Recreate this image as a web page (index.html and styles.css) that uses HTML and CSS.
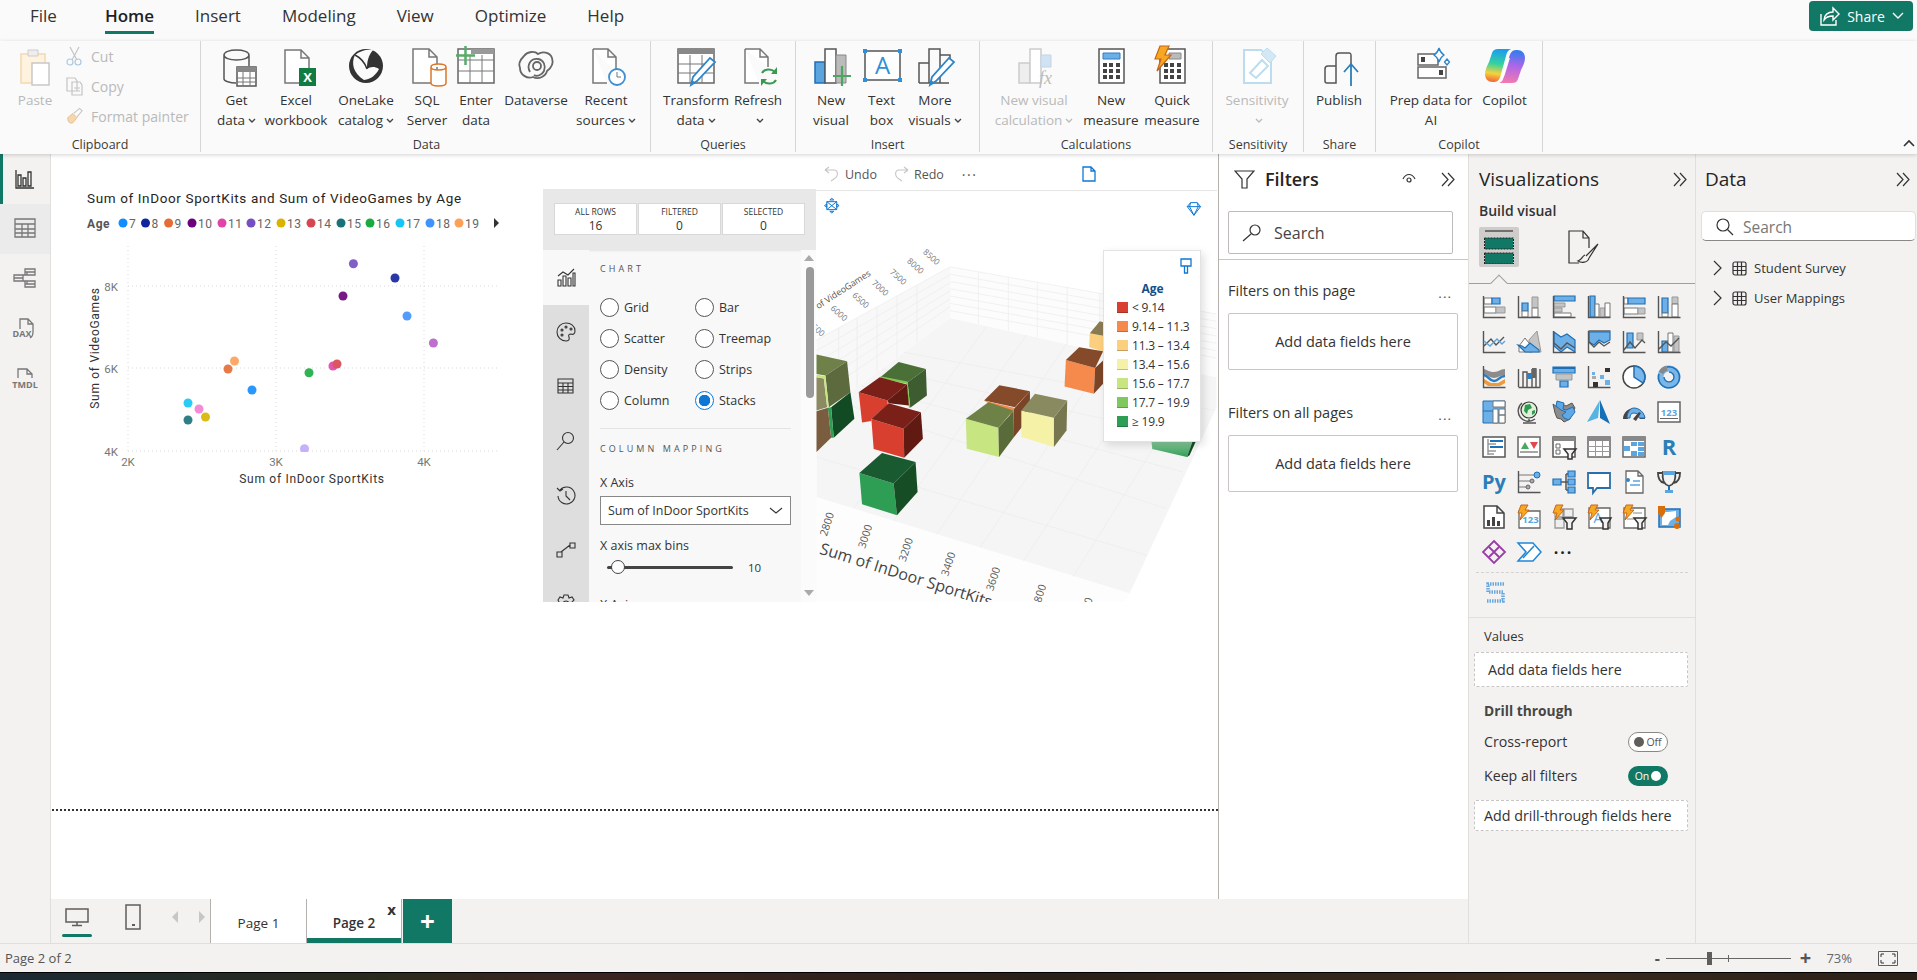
FILE: index.html
```html
<!DOCTYPE html>
<html lang="en">
<head>
<meta charset="utf-8">
<title>Power BI Desktop</title>
<link rel="stylesheet" href="styles.css">
</head>
<body>
<header class="menubar">
  <nav class="tabs">
    <span class="tab tab-file">File</span>
    <span class="tab tab-on">Home</span>
    <span class="tab">Insert</span>
    <span class="tab">Modeling</span>
    <span class="tab">View</span>
    <span class="tab">Optimize</span>
    <span class="tab">Help</span>
  </nav>
  <button class="share">
    <svg width="22" height="22" viewBox="0 0 22 22"><path class="wl" d="M3 9v11h15v-5M6 15c0-5 4-8 9-8V3l6 6-6 6v-4c-4 0-7 1-9 4z"/></svg>
    <span>Share</span>
    <svg width="12" height="8" viewBox="0 0 12 8"><path class="wl" d="M1 1l5 5 5-5"/></svg>
  </button>
</header>

<section class="ribbon">
  <div class="group g-clip">
    <div class="gbody">
      <div class="btn b46 off">
        <svg class="ico" viewBox="0 0 40 40"><path fill="#fff3df" stroke="#f3d9ae" stroke-width="1.5" d="M6 8h24v29H6z"/><path fill="#eee" stroke="#ccc" d="M13 4h10v6H13z"/><path fill="#fff" stroke="#c8c8c8" stroke-width="1.5" d="M17 17h17v22H17z"/></svg>
        <span class="lbl">Paste</span>
      </div>
      <div class="smallcol">
        <div class="small"><svg width="17" height="20" viewBox="0 0 17 20"><path class="fa" d="M4 1l7 13M13 1L6 14"/><circle class="fb" cx="4" cy="16" r="3"/><circle class="fb" cx="12" cy="16" r="3"/></svg>Cut</div>
        <div class="small"><svg width="17" height="20" viewBox="0 0 17 20"><path class="fa" d="M1 2h8l2 3v10H1zM6 6h8l2 3v10H6zM8 12h6M8 15h6"/></svg>Copy</div>
        <div class="small"><svg width="17" height="20" viewBox="0 0 20 20"><path fill="#f6d6ac" stroke="#e9b98a" d="M2 12l6-5 5 5-5 6c-3 1-6 0-6-6z"/><path class="fa" d="M9 7l7-6 3 3-6 7"/></svg>Format painter</div>
      </div>
    </div>
    <div class="glabel">Clipboard</div>
  </div>

  <div class="group g-data">
    <div class="gbody">
      <div class="btn b67">
        <svg class="ico" viewBox="0 0 40 40"><path class="s" d="M7 9v24c0 2 6 4 12 4M7 9c0-3 5.500-5 12.500-5S32 6 32 9v11M7 9c0 3 5.500 5 12.500 5S32 12 32 9"/><path fill="#fff" stroke="#555" stroke-width="1.500" d="M20 21h19v19H20z"/><path fill="#888" d="M20 21h19v5H20z"/><path class="t" d="M26 26v14M33 26v14M20 32h19M20 36h19"/></svg>
        <span class="lbl">Get<br>data<svg class="chev" viewBox="0 0 8 6"><path d="M1 1l3 3 3-3"/></svg></span>
      </div>
      <div class="btn b52">
        <svg class="ico" viewBox="0 0 40 40"><path class="s2" d="M9 4h16l8 8v25H9zM25 4v8h8"/><rect x="23" y="22" width="17" height="18" fill="#107c41"/><text class="xl" x="31.500" y="35.500">X</text></svg>
        <span class="lbl">Excel<br>workbook</span>
      </div>
      <div class="btn b88">
        <svg class="ico" viewBox="0 0 40 40"><circle cx="20" cy="20" r="17" fill="#333"/><path fill="#fafafa" d="M9 9c-4 8-2 18 9 25 7-1 12-5 15-11-5-3-9-2-12 0 0-7 1-13 6-19-7-1-13 1-18 5z"/><path fill="none" stroke="#333" stroke-width="1.500" d="M9 9c6 3 10 8 12 14"/></svg>
        <span class="lbl">OneLake<br>catalog<svg class="chev" viewBox="0 0 8 6"><path d="M1 1l3 3 3-3"/></svg></span>
      </div>
      <div class="btn b34">
        <svg class="ico" viewBox="0 0 40 40"><path class="s2" d="M6 3h16l8 8v26H6zM22 3v8h8"/><path fill="#fff" stroke="#d9782d" stroke-width="1.500" d="M24 21c0-4 15-4 15 0v16c0 4-15 4-15 0zM24 21c0 4 15 4 15 0"/></svg>
        <span class="lbl">SQL<br>Server</span>
      </div>
      <div class="btn b64">
        <svg class="ico" viewBox="0 0 40 40"><path fill="#fff" stroke="#666" stroke-width="1.500" d="M2 3h36v34H2z"/><path fill="#999" d="M15 3h23v5H15z"/><path class="t" d="M14 9v28M26 9v28M2 14h36M2 25h36"/><path stroke="#5aaa6a" stroke-width="2.500" fill="none" d="M9.500 0v19M0 9.500h19"/></svg>
        <span class="lbl">Enter<br>data</span>
      </div>
      <div class="btn b56">
        <svg class="ico" viewBox="0 0 40 40"><path fill="none" stroke="#666" stroke-width="1.800" d="M8 10c4-5 11-5 14-2 4-3 12-2 14 4 2 6-1 10-5 13-1 5-8 9-14 6-6 2-13-2-13-9-2-4 1-9 4-12z"/><path fill="none" stroke="#666" stroke-width="1.800" d="M14 26c-4-7 1-14 8-13 6 1 8 7 6 12-2 4-7 6-10 4"/><circle cx="21" cy="20" r="4" fill="none" stroke="#666" stroke-width="1.800"/></svg>
        <span class="lbl">Dataverse</span>
      </div>
      <div class="btn b84">
        <svg class="ico" viewBox="0 0 40 40"><path class="s2" d="M7 3h15l8 8v15M22 3v8h8M7 3v34h14"/><circle cx="31" cy="31" r="8" fill="#fff" stroke="#3f8fd2" stroke-width="1.800"/><path class="t" d="M31 26v5h4"/></svg>
        <span class="lbl">Recent<br>sources<svg class="chev" viewBox="0 0 8 6"><path d="M1 1l3 3 3-3"/></svg></span>
      </div>
    </div>
    <div class="glabel">Data</div>
  </div>

  <div class="group g-query">
    <div class="gbody">
      <div class="btn b90">
        <svg class="ico" viewBox="0 0 40 40"><path fill="#fff" stroke="#666" stroke-width="1.500" d="M2 3h36v34H2z"/><path fill="#888" d="M2 3h36v5H2z"/><path class="t" d="M14 9v28M26 9v28M2 18h36M2 27h36"/><path fill="#fff" stroke="#2f85c8" stroke-width="1.800" d="M15 39l2-8 17-19 5 4-18 19z"/><path fill="#2f85c8" d="M15 39l1-5 4 3z"/></svg>
        <span class="lbl">Transform<br>data<svg class="chev" viewBox="0 0 8 6"><path d="M1 1l3 3 3-3"/></svg></span>
      </div>
      <div class="btn b34">
        <svg class="ico" viewBox="0 0 40 40"><path class="s2" d="M7 3h15l8 8v10M22 3v8h8M7 3v34h14"/><path fill="none" stroke="#3a9a50" stroke-width="2" d="M24 27c2-4 9-5 13-1M38 34c-2 4-9 5-13 1"/><path fill="#3a9a50" d="M39 21v7h-6zM23 40v-7h6z"/></svg>
        <span class="lbl">Refresh<br><svg class="chev" viewBox="0 0 8 6"><path d="M1 1l3 3 3-3"/></svg></span>
      </div>
    </div>
    <div class="glabel">Queries</div>
  </div>

  <div class="group g-insert">
    <div class="gbody">
      <div class="btn b70">
        <svg class="ico" viewBox="0 0 40 40"><path fill="#5aa5e0" stroke="#1f6fb5" stroke-width="1.500" d="M4 16h10v21H4z"/><path fill="#fff" stroke="#555" stroke-width="1.500" d="M14 3h11v34H14z"/><path fill="#bbb" stroke="#888" d="M25 9h10v28H25z"/><path stroke="#4ea55f" stroke-width="2.200" fill="none" d="M31 20v20M22 30h18"/></svg>
        <span class="lbl">New<br>visual</span>
      </div>
      <div class="btn b31">
        <svg class="ico" viewBox="0 0 40 40"><path fill="#fff" stroke="#555" stroke-width="1.500" d="M3 5h35v29H3z"/><text class="atxt" x="20.500" y="28">A</text><path fill="#2f8fd8" d="M1 3h4v4H1zM36 3h4v4h-4zM1 32h4v4H1zM36 32h4v4h-4z"/></svg>
        <span class="lbl">Text<br>box</span>
      </div>
      <div class="btn b76">
        <svg class="ico" viewBox="0 0 40 40"><path class="s" d="M4 37V17h10v20M14 17V3h11v34M25 9h10v12M4 37h30"/><path fill="#fff" stroke="#2f85c8" stroke-width="1.800" d="M15 39l2-8 17-19 5 4-18 19z"/><path fill="#2f85c8" d="M15 39l1-5 4 3z"/></svg>
        <span class="lbl">More<br>visuals<svg class="chev" viewBox="0 0 8 6"><path d="M1 1l3 3 3-3"/></svg></span>
      </div>
    </div>
    <div class="glabel">Insert</div>
  </div>

  <div class="group g-calc">
    <div class="gbody">
      <div class="btn b108 off">
        <svg class="ico" viewBox="0 0 40 40"><path fill="#eee" stroke="#ccc" stroke-width="1.500" d="M5 17h11v20H5z"/><path fill="#fff" stroke="#ccc" stroke-width="1.500" d="M16 3h11v34H16z"/><path fill="#cfe3f5" stroke="#c5d5e2" d="M27 9h10v12H27z"/><text class="fx" x="25" y="38">fx</text></svg>
        <span class="lbl">New visual<br>calculation<svg class="chev" viewBox="0 0 8 6"><path d="M1 1l3 3 3-3"/></svg></span>
      </div>
      <div class="btn b46">
        <svg class="ico" viewBox="0 0 40 40"><path fill="#fff" stroke="#555" stroke-width="1.500" d="M8 3h25v34H8z"/><path fill="#6db0e8" stroke="#2f7fc4" d="M12 7h17v6H12z"/><path fill="#444" d="M12 17h4v4h-4zM18 17h4v4h-4zM25 17h4v4h-4zM12 23h4v4h-4zM18 23h4v4h-4zM25 23h4v4h-4zM12 29h4v4h-4zM18 29h4v4h-4zM25 29h4v4h-4z"/></svg>
        <span class="lbl">New<br>measure</span>
      </div>
      <div class="btn b76">
        <svg class="ico" viewBox="0 0 40 40"><path fill="#fff" stroke="#555" stroke-width="1.500" d="M8 3h25v34H8z"/><path fill="#bbb" stroke="#888" d="M17 7h12v6H17z"/><path fill="#444" d="M12 17h4v4h-4zM18 17h4v4h-4zM25 17h4v4h-4zM12 23h4v4h-4zM18 23h4v4h-4zM25 23h4v4h-4zM12 29h4v4h-4zM18 29h4v4h-4zM25 29h4v4h-4z"/><path fill="#f7a823" stroke="#c8661a" stroke-width="1.200" d="M8 0h9l-4 9h6L5 25l4-12H3z"/></svg>
        <span class="lbl">Quick<br>measure</span>
      </div>
    </div>
    <div class="glabel">Calculations</div>
  </div>

  <div class="group g-sens">
    <div class="gbody">
      <div class="btn b88 off">
        <svg class="ico" viewBox="0 0 40 40"><path fill="#fff" stroke="#bcdcef" stroke-width="2" d="M7 4h17l10 8v25H7z"/><path fill="none" stroke="#bcdcef" stroke-width="2" d="M13 27l12-13 6 6-12 12z"/><path fill="#d2e8f5" stroke="#bcdcef" d="M24 8l6-6 9 8-6 7z"/></svg>
        <span class="lbl">Sensitivity<br><svg class="chev" viewBox="0 0 8 6"><path d="M1 1l3 3 3-3"/></svg></span>
      </div>
    </div>
    <div class="glabel">Sensitivity</div>
  </div>

  <div class="group g-share">
    <div class="gbody">
      <div class="btn b70">
        <svg class="ico" viewBox="0 0 40 40"><path class="s" d="M17 37h-9c-1 0-2-1-2-2V23c0-2 1-3 3-3h8v17zM17 20V10c0-2 1-3 3-3h10c2 0 2 1 2 3v9"/><path fill="none" stroke="#2a7fb8" stroke-width="1.800" d="M32 40V18M25 26l7-8 7 8"/></svg>
        <span class="lbl">Publish</span>
      </div>
    </div>
    <div class="glabel">Share</div>
  </div>

  <div class="group g-copilot">
    <div class="gbody">
      <div class="btn b110">
        <svg class="ico" viewBox="0 0 40 40"><path fill="#fff" stroke="#666" stroke-width="1.500" d="M7 8h20v11H7zM7 21h28v11H7z"/><path fill="#444" d="M10 11h4v5h-4zM28 24h4v5h-4z"/><path fill="#fafafa" stroke="#2f85c8" stroke-width="1.300" d="M28 2c1 4 2 5 5 7-3 2-4 3-5 7-1-4-2-5-5-7 3-2 4-3 5-7zM36 13l2.500 3-2.500 3-2.500-3z"/></svg>
        <span class="lbl">Prep data for<br>AI</span>
      </div>
      <div class="btn b37">
        <svg class="ico" viewBox="0 0 40 40"><defs><linearGradient id="cpa" x1=".5" y1="0" x2=".4" y2="1"><stop offset="0" stop-color="#1a9bf0"/><stop offset=".45" stop-color="#34d2a0"/><stop offset=".75" stop-color="#f6d23c"/><stop offset="1" stop-color="#f0683c"/></linearGradient><linearGradient id="cpb" x1=".6" y1="0" x2=".5" y2="1"><stop offset="0" stop-color="#2f7cf0"/><stop offset=".5" stop-color="#b266e6"/><stop offset="1" stop-color="#f07ab0"/></linearGradient></defs><path fill="url(#cpb)" d="M27 37H14c3-1 4-3 5-7l5-18c1-5 3-8 7-8h1c5 0 8 3 8 8 0 4-2 8-4 12l-3 9c-1 3-3 4-6 4z"/><path fill="url(#cpa)" d="M13 3h13c-3 1-4 3-5 7l-5 18c-1 5-3 8-7 8H8c-5 0-8-3-8-8 0-4 2-8 4-12l3-9c1-3 3-4 6-4z"/><path fill="#fff" opacity=".9" d="M25 12l-5 16c-1 3-2 4-4 5l5-18c1-2 2-3 4-3z"/></svg>
        <span class="lbl">Copilot</span>
      </div>
    </div>
    <div class="glabel">Copilot</div>
  </div>
  <svg class="collapse" width="12" height="8" viewBox="0 0 12 8"><path d="M1 7l5-5 5 5"/></svg>
</section>

<main class="workspace">
  <aside class="leftnav">
    <div class="nav nav-active"><svg width="22" height="22" viewBox="0 0 22 22"><path class="n" d="M2 2v18h18"/><path class="n" d="M4 7h3v11H4zM9 10h3v8H9zM14 4h3v14h-3z"/></svg></div>
    <div class="nav nav-sel"><svg width="22" height="22" viewBox="0 0 22 22"><path class="n2" d="M1 1h20v18H1zM1 6h20M1 11h20M1 15h20M8 6v13M14 6v13"/></svg></div>
    <div class="nav"><svg width="24" height="24" viewBox="0 0 24 24"><path class="n2" d="M12 2h10v6H12zM1 8h9v6H1zM1 11h9M12 14h10v6H12zM12 17h10M12 5h10M10 8h4V5M10 14h4v3"/></svg></div>
    <div class="nav"><svg width="26" height="24" viewBox="0 0 26 24"><path class="n2" d="M8 12V2h8l5 5v8c0 3-1 5-3 6M16 2v5h5"/><text class="navt" x="10" y="20">DAX</text></svg></div>
    <div class="nav"><svg width="26" height="24" viewBox="0 0 26 24"><path class="n2" d="M6 11V2h9l5 5v4M15 2v5h5"/><text class="navt" x="13" y="21">TMDL</text></svg></div>
  </aside>

  <div class="center">
    <div class="upper">
      <div class="canvas">
        <div class="undo">
          <svg class="tb-i" width="16" height="16" viewBox="0 0 16 16"><path d="M1 4h9c4 0 5 6 0 9L7 15M1 4l4-3M1 4l4 3"/></svg><span class="tb-t">Undo</span>
          <svg class="tb-i ml16" width="16" height="16" viewBox="0 0 16 16"><path d="M15 4H6C2 4 1 10 6 13l3 2M15 4l-4-3M15 4l-4 3"/></svg><span class="tb-t">Redo</span>
          <span class="tb-dots">···</span>
          <svg class="tb-doc" width="14" height="16" viewBox="0 0 14 16"><path d="M1 1h8l4 4v10H1zM9 1v4h4"/></svg>
        </div>

        <svg class="scatter" width="450" height="300" viewBox="70 185 450 300">
          <defs><clipPath id="plot"><rect x="70" y="185" width="450" height="267"/></clipPath></defs>
          <text class="sc-title" x="87" y="203">Sum of InDoor SportKits and Sum of VideoGames by Age</text>
          <text class="sc-age" x="87" y="228">Age</text>
          <g class="sc-leg">
            <circle cx="123" cy="223" r="4.500" fill="#118dff"/><text x="129" y="228">7</text>
            <circle cx="145.500" cy="223" r="4.500" fill="#12239e"/><text x="151.500" y="228">8</text>
            <circle cx="168.600" cy="223" r="4.500" fill="#e66c37"/><text x="174.500" y="228">9</text>
            <circle cx="192" cy="223" r="4.500" fill="#6b007b"/><text x="198" y="228">10</text>
            <circle cx="222" cy="223" r="4.500" fill="#e044a7"/><text x="228" y="228">11</text>
            <circle cx="251" cy="223" r="4.500" fill="#744ec2"/><text x="257" y="228">12</text>
            <circle cx="281" cy="223" r="4.500" fill="#d9b300"/><text x="287" y="228">13</text>
            <circle cx="311" cy="223" r="4.500" fill="#d64550"/><text x="317" y="228">14</text>
            <circle cx="341" cy="223" r="4.500" fill="#197278"/><text x="347" y="228">15</text>
            <circle cx="370" cy="223" r="4.500" fill="#1aab40"/><text x="376" y="228">16</text>
            <circle cx="400" cy="223" r="4.500" fill="#15c6f4"/><text x="406" y="228">17</text>
            <circle cx="430" cy="223" r="4.500" fill="#4092ff"/><text x="436" y="228">18</text>
            <circle cx="459" cy="223" r="4.500" fill="#ffa058"/><text x="465" y="228">19</text>
            <path d="M494 218l5 5-5 5z" fill="#333"/>
          </g>
          <path class="sc-grid" d="M128 246v205M276 246v205M424 246v205M128 286h370M128 368h370M128 451h370"/>
          <g class="sc-tick">
            <text x="118" y="291" text-anchor="end">8K</text>
            <text x="118" y="373" text-anchor="end">6K</text>
            <text x="118" y="456" text-anchor="end">4K</text>
            <text x="128" y="466" text-anchor="middle">2K</text>
            <text x="276" y="466" text-anchor="middle">3K</text>
            <text x="424" y="466" text-anchor="middle">4K</text>
          </g>
          <text class="sc-ax" x="312" y="483" text-anchor="middle">Sum of InDoor SportKits</text>
          <text class="sc-ax" transform="translate(99 348) rotate(-90)" text-anchor="middle">Sum of VideoGames</text>
          <g class="sc-dots" clip-path="url(#plot)">
            <circle cx="353.400" cy="263.700" r="4.500" fill="#744ec2"/>
            <circle cx="395" cy="278" r="4.500" fill="#12239e"/>
            <circle cx="343" cy="296" r="4.500" fill="#6b007b"/>
            <circle cx="407" cy="316" r="4.500" fill="#4092ff"/>
            <circle cx="433.400" cy="343" r="4.500" fill="#b75fc8"/>
            <circle cx="234.500" cy="361" r="4.500" fill="#ffa058"/>
            <circle cx="228" cy="369" r="4.500" fill="#e66c37"/>
            <circle cx="333" cy="366" r="4.500" fill="#e044a7"/>
            <circle cx="337" cy="364" r="4.500" fill="#d64550"/>
            <circle cx="309" cy="372.700" r="4.500" fill="#1aab40"/>
            <circle cx="252" cy="390" r="4.500" fill="#118dff"/>
            <circle cx="188" cy="403" r="4.500" fill="#15c6f4"/>
            <circle cx="199" cy="409" r="4.500" fill="#f47ed4"/>
            <circle cx="205.500" cy="417" r="4.500" fill="#d9b300"/>
            <circle cx="188" cy="420" r="4.500" fill="#197278"/>
            <circle cx="304.500" cy="448.700" r="4.500" fill="#bfa9fa"/>
          </g>
        </svg>

        <div class="sanddance">
          <div class="stats">
            <div class="stat"><span class="stat-k">ALL ROWS</span><span class="stat-v">16</span></div>
            <div class="stat"><span class="stat-k">FILTERED</span><span class="stat-v">0</span></div>
            <div class="stat"><span class="stat-k">SELECTED</span><span class="stat-v">0</span></div>
          </div>
          <div class="sd-body">
            <div class="sd-tabs">
              <div class="sd-tab sd-tab-on"><svg width="20" height="20" viewBox="0 0 20 20"><path class="k" d="M2 13h3v6H2zM7 9h3v10H7zM12 11h3v8h-3zM17 6h2v13h-2zM2 9l5-4 5 3 6-6"/></svg></div>
              <div class="sd-tab"><svg width="20" height="20" viewBox="0 0 20 20"><path class="k" d="M10 1c5 0 9 3 9 8 0 3-2 4-4 3-2 0-3 1-2 3 1 3-1 4-3 4-5 0-9-4-9-9s4-9 9-9z"/><circle class="k" cx="6" cy="8" r="1"/><circle class="k" cx="10" cy="5" r="1"/><circle class="k" cx="15" cy="7" r="1"/><circle class="k" cx="6" cy="13" r="1"/></svg></div>
              <div class="sd-tab"><svg width="20" height="20" viewBox="0 0 20 20"><path class="k" d="M2 3h15v14H2zM2 7h15M2 10.500h15M2 14h15M7 7v10M12 7v10"/></svg></div>
              <div class="sd-tab"><svg width="20" height="20" viewBox="0 0 20 20"><circle class="k" cx="12" cy="7" r="5.500"/><path class="k" d="M8 11l-7 8"/></svg></div>
              <div class="sd-tab"><svg width="20" height="20" viewBox="0 0 20 20"><path class="k" d="M4 5a8.500 8.500 0 1 1-2 6M1 3l3 3 3-2M10 6v5l4 4"/></svg></div>
              <div class="sd-tab"><svg width="20" height="20" viewBox="0 0 20 20"><path class="k" d="M1 12h5v5H1zM14 3h5v5h-5zM5 12l9-7"/></svg></div>
              <div class="sd-tab"><svg width="20" height="20" viewBox="0 0 20 20"><circle class="k" cx="10" cy="10" r="3"/><path class="k" d="M8 1h4l1 3 3-1 2 3-2 2 2 4-2 3-3-1-1 3H8l-1-3-3 1-2-3 2-2-2-4 2-3 3 1z"/></svg></div>
            </div>
            <div class="sd-content">
              <div class="sd-h">CHART</div>
              <div class="radios">
                <label class="radio"><i class="dot"></i>Grid</label>
                <label class="radio"><i class="dot"></i>Bar</label>
                <label class="radio"><i class="dot"></i>Scatter</label>
                <label class="radio"><i class="dot"></i>Treemap</label>
                <label class="radio"><i class="dot"></i>Density</label>
                <label class="radio"><i class="dot"></i>Strips</label>
                <label class="radio"><i class="dot"></i>Column</label>
                <label class="radio"><i class="dot dot-on"></i>Stacks</label>
              </div>
              <div class="sd-h sd-h2">COLUMN MAPPING</div>
              <div class="sd-f">X Axis</div>
              <div class="sd-sel"><span>Sum of InDoor SportKits</span><svg width="14" height="8" viewBox="0 0 14 8"><path class="k" d="M1 1l6 5 6-5"/></svg></div>
              <div class="sd-f sd-f2">X axis max bins</div>
              <div class="slider"><div class="track"><i class="knob"></i></div><span>10</span></div>
              <div class="sd-f">X Axis</div>
            </div>
            <div class="sd-scroll"><i class="up"></i><i class="thumb"></i><i class="down"></i></div>
          </div>
        </div>

        <svg class="cube3d" width="401" height="412" viewBox="18 30 1203 1236">
          <path d="M420 412L1221 590V680L960 1240 945 1266H18V950 711Z" fill="#f5f5f5"/>
          <path d="M18 950L960 1240 945 1266H18Z" fill="#fdfdfd"/>
          <path d="M420 258L1221 400V590L420 412Z" fill="#fcfcfc"/>
          <path d="M420 258L18 478V711L420 412Z" fill="#f8f8f8"/>
          <path class="g3" d="M420 258L1221 400M420 280L1221 422M420 302L1221 444M420 324L1221 466M420 346L1221 488M420 368L1221 510M420 390L1221 532M505 273V430M595 289V450M682 305V470M772 320V490M870 338V512"/>
          <path class="g3" d="M420 258L18 478M420 282L18 510M420 306L18 545M420 330L18 580M420 354L18 615M420 378L18 650M320 314V486M260 347V530M200 380V575M140 413V620M85 442V660"/>
          <path class="g3" d="M530 437L130 985M650 463L250 1022M770 490L380 1062M900 520L510 1102M1030 548L640 1143M1170 580L790 1190"/>
          <path class="g3" d="M280 515L1215 690M215 565L1170 780M150 615L1120 875M85 665L1070 985M18 830L1010 1125"/>
          <g class="t3s">
            <text transform="translate(358 235) rotate(42)" text-anchor="middle">8500</text>
            <text transform="translate(310 262) rotate(42)" text-anchor="middle">8000</text>
            <text transform="translate(258 295) rotate(42)" text-anchor="middle">7500</text>
            <text transform="translate(204 328) rotate(42)" text-anchor="middle">7000</text>
            <text transform="translate(145 365) rotate(42)" text-anchor="middle">6500</text>
            <text transform="translate(80 404) rotate(42)" text-anchor="middle">6000</text>
            <text transform="translate(12 450) rotate(42)" text-anchor="middle">5500</text>
          </g>
          <text class="t3a" transform="translate(183 282) rotate(-33)" text-anchor="end">Sum of VideoGames</text>
          <g class="t3x">
            <text transform="translate(60 1035) rotate(-72)" text-anchor="middle">2800</text>
            <text transform="translate(175 1072) rotate(-72)" text-anchor="middle">3000</text>
            <text transform="translate(297 1112) rotate(-72)" text-anchor="middle">3200</text>
            <text transform="translate(425 1155) rotate(-72)" text-anchor="middle">3400</text>
            <text transform="translate(560 1200) rotate(-72)" text-anchor="middle">3600</text>
            <text transform="translate(698 1252) rotate(-72)" text-anchor="middle">3800</text>
            <text transform="translate(838 1292) rotate(-72)" text-anchor="middle">4000</text>
          </g>
          <text class="t3b" transform="translate(25 1120) rotate(17.500)">Sum of InDoor SportKits</text>

          <!-- far-left stack -->
          <path d="M18 522L110 542 45 585 18 580Z" fill="#6f8148"/>
          <path d="M45 585L110 542 120 635 55 680Z" fill="#5d6a3d"/>
          <path d="M18 590L40 594 50 680 18 690Z" fill="#8b8a63"/>
          <path d="M18 582L45 587 55 680 50 680 40 594 18 590Z" fill="#c6e57f"/>
          <path d="M62 680L120 635 132 715 70 772Z" fill="#124a24"/>
          <path d="M52 682L62 680 70 772 62 772Z" fill="#2f9e55"/>
          <path d="M18 692L52 682 62 772 18 815Z" fill="#7a5c3e"/>
          <!-- back green -->
          <path d="M210 590L265 544 347 565 292 605Z" fill="#4a7038"/>
          <path d="M292 605L347 565 350 645 300 682Z" fill="#3d5c30"/>
          <path d="M210 587L292 603 300 682 296 682 288 610 215 594Z" fill="#7ec850"/>
          <!-- rear red -->
          <path d="M145 635L232 660 232 672 183 716V722L155 726Z" fill="#d93f2e"/>
          <path d="M145 635L208 590 290 612 232 660Z" fill="#7a2018"/>
          <path d="M232 660L290 612 296 675 235 668Z" fill="#611a12"/>
          <!-- front red -->
          <path d="M183 716L280 745 282 832 190 806Z" fill="#d93f2e"/>
          <path d="M280 745L332 695 338 775 282 832Z" fill="#611a12"/>
          <path d="M183 716L235 668 332 695 280 745Z" fill="#7a2018"/>
          <!-- dark green -->
          <path d="M147 878L250 910 260 1005 155 972Z" fill="#2f9e55"/>
          <path d="M250 910L316 845 322 935 260 1005Z" fill="#164d25"/>
          <path d="M147 878L215 818 316 845 250 910Z" fill="#1a5a30"/>
          <!-- orange-brown behind lime -->
          <path d="M522 660L568 614 660 632 615 680Z" fill="#854a2a"/>
          <path d="M612 685L660 632 660 710 612 770Z" fill="#7a4426"/>
          <path d="M522 660L612 682 612 770 600 760V690L535 668Z" fill="#f08a4c"/>
          <!-- lime -->
          <path d="M467 715L565 742 567 830 470 805Z" fill="#c7e681"/>
          <path d="M565 742L610 692 612 770 567 830Z" fill="#5a6b3a"/>
          <path d="M467 715L535 665 610 690 565 742Z" fill="#6e8248"/>
          <!-- yellow -->
          <path d="M634 690L732 712 732 800 634 770Z" fill="#f5f2a8"/>
          <path d="M732 712L772 660 770 750 732 800Z" fill="#76764f"/>
          <path d="M634 690L675 640 772 660 732 712Z" fill="#8a8a60"/>
          <!-- right cubes -->
          <path d="M840 458L880 465V512L838 500Z" fill="#fccf7e"/>
          <path d="M840 458L870 422 880 425V465Z" fill="#8a7a50"/>
          <path d="M768 538L856 562 852 640 764 618Z" fill="#f58a4c"/>
          <path d="M856 562L880 540V610L852 640Z" fill="#7a4426"/>
          <path d="M768 538L808 500 880 512 856 562Z" fill="#854a2a"/>
          <defs><linearGradient id="gl" x1="0" y1="0" x2="0" y2="1"><stop offset="0" stop-color="#8fcba0"/><stop offset="1" stop-color="#2f9e55"/></linearGradient></defs>
          <path d="M1025 780L1150 780 1132 830 1028 806Z" fill="url(#gl)"/>
          <path d="M1132 830L1150 780H1160L1140 825Z" fill="#164d25"/>

          <g class="i3">
            <path d="M49 62h30v24H49zM49 62l30 24M79 62L49 86M64 52l-6 5h12zM64 96l-6-5h12zM42 74l7-5v10zM86 74l-7-5v10z"/>
            <path d="M1143 65h20l10 12-20 26-20-26zM1133 77h40M1143 65l-3 12 13 26 13-26-3-12"/>
          </g>
        </svg>

        <div class="legend3d">
          <svg class="pin" width="12" height="16" viewBox="0 0 12 16"><path d="M1 1h10v7H1zM4.500 8v7h3V8"/></svg>
          <div class="lg-h">Age</div>
          <div class="lg-r"><i class="sw c1"></i>&lt; 9.14</div>
          <div class="lg-r"><i class="sw c2"></i>9.14 – 11.3</div>
          <div class="lg-r"><i class="sw c3"></i>11.3 – 13.4</div>
          <div class="lg-r"><i class="sw c4"></i>13.4 – 15.6</div>
          <div class="lg-r"><i class="sw c5"></i>15.6 – 17.7</div>
          <div class="lg-r"><i class="sw c6"></i>17.7 – 19.9</div>
          <div class="lg-r"><i class="sw c7"></i>≥ 19.9</div>
        </div>

        <div class="pagebreak"></div>
      </div>

      <aside class="filters">
        <div class="f-head">
          <svg width="21" height="19" viewBox="0 0 21 19"><path class="f" d="M1 1h19l-7 8v9H8V9z"/></svg>
          <span class="f-title">Filters</span>
          <svg class="f-eye" width="14" height="12" viewBox="0 0 14 12"><path class="f" d="M1 6c3-6 9-6 12 0"/><circle class="f" cx="7" cy="7" r="2"/></svg>
          <svg class="f-dbl" width="16" height="15" viewBox="0 0 16 15"><path class="f" d="M2 1l6 6.500L2 14M8 1l6 6.500L8 14"/></svg>
        </div>
        <div class="f-search">
          <svg width="20" height="18" viewBox="0 0 20 18"><circle class="f" cx="13" cy="6" r="5"/><path class="f" d="M9 10l-8 7"/></svg>
          <span>Search</span>
        </div>
        <div class="f-sec"><span>Filters on this page</span><b>...</b></div>
        <div class="f-box">Add data fields here</div>
        <div class="f-sec f-sec2"><span>Filters on all pages</span><b>...</b></div>
        <div class="f-box">Add data fields here</div>
      </aside>
    </div>

    <footer class="pagebar">
      <div class="view-i view-on"><svg width="24" height="20" viewBox="0 0 24 20"><path class="pg" d="M1 2h22v13H1zM12 15v3M7 18.500h10"/></svg></div>
      <div class="view-i"><svg width="16" height="26" viewBox="0 0 16 26"><path class="pg" d="M1 1h14v24H1z"/><rect x="7" y="20" width="3" height="2" fill="#605e5c"/></svg></div>
      <div class="arrows"><i class="al"></i><i class="ar"></i></div>
      <div class="ptab">Page 1</div>
      <div class="ptab ptab-on">Page 2<span class="px">x</span></div>
      <div class="padd">+</div>
    </footer>
  </div>

  <aside class="viz">
    <div class="p-head"><span class="p-title">Visualizations</span><svg width="16" height="15" viewBox="0 0 16 15"><path class="f" d="M2 1l6 6.500L2 14M8 1l6 6.500L8 14"/></svg></div>
    <div class="v-sub">Build visual</div>
    <div class="v-modes">
      <div class="v-mode-on"><svg width="30" height="34" viewBox="0 0 30 34"><path class="vk" d="M1 1h28"/><rect x="1" y="8" width="28" height="11" fill="#117865"/><rect x="1" y="23" width="28" height="11" fill="#117865"/><path class="vd" d="M.5 8h29v11H.5zM.5 23h29v11H.5z"/></svg></div>
      <svg class="v-fmt" width="32" height="34" viewBox="0 0 32 34"><path class="vk" d="M12 33H2V1h14l6 7v10M16 1v7h6"/><path class="vk" d="M31 14L19 26M31 14l-9 14M18 25c-3 1-3 5-7 6 3 2 10 2 11-3"/></svg>
    </div>
    <div class="v-rule"><i></i></div>
    <div class="v-grid">
      <svg class="vi" viewBox="0 0 24 24"><path class="w" d="M2 3h8v6H2z"/><path class="b" d="M10 3h8v6h-8z"/><path class="w" d="M2 12h12v6H2z"/><path class="g" d="M14 12h9v6h-9z"/><path class="ax" d="M1.500 1v21.500h22"/></svg>
      <svg class="vi" viewBox="0 0 24 24"><path class="b" d="M5 8h6v8H5z"/><path class="w" d="M5 16h6v6H5z"/><path class="g" d="M15 2h6v11h-6z"/><path class="w" d="M15 13h6v9h-6z"/><path class="ax" d="M1.500 1v21.500h22"/></svg>
      <svg class="vi" viewBox="0 0 24 24"><path class="b" d="M2 1h21v5H2z"/><path class="g" d="M2 8h11v4H2z"/><path class="g" d="M2 13h8v4H2z"/><path class="w" d="M2 18h17v4H2z"/><path class="ax" d="M1.500 1v21.500h22"/></svg>
      <svg class="vi" viewBox="0 0 24 24"><path class="b" d="M3 1h5v21H3z"/><path class="w" d="M8 9h4v13H8z"/><path class="g" d="M13 13h5v9h-5z"/><path class="w" d="M18 8h5v14h-5z"/><path class="ax" d="M1.500 1v21.500h22"/></svg>
      <svg class="vi" viewBox="0 0 24 24"><path class="w" d="M2 3h4v6H2z"/><path class="b" d="M6 3h17v6H6z"/><path class="w" d="M2 13h14v6H2z"/><path class="g" d="M16 13h7v6h-7z"/><path class="ax" d="M1.500 1v21.500h22"/></svg>
      <svg class="vi" viewBox="0 0 24 24"><path class="b" d="M5 3h6v15H5z"/><path class="w" d="M5 18h6v4H5z"/><path class="g" d="M15 2h6v7h-6z"/><path class="w" d="M15 9h6v13h-6z"/><path class="ax" d="M1.500 1v21.500h22"/></svg>

      <svg class="vi" viewBox="0 0 24 24"><path class="ax" d="M1.500 1v21.500h22M2 16l7-7 5 6 8-8"/><path class="bl" d="M2 11l6 5 7-7 5 5 3-3"/></svg>
      <svg class="vi" viewBox="0 0 24 24"><path class="g" d="M12 10l8-9 4 21H12z"/><path class="w" d="M2 16l6-8 7 9v5H2z"/><path class="b" d="M1 15l7 7h14v0-2l-9-7-5 5-3-2z"/></svg>
      <svg class="vi" viewBox="0 0 24 24"><path class="b" d="M2 2l7 5 6-3 8 6v12l-8-5-6 5-7-6z"/><path class="ax" d="M1.500 1v21.500h22M2 13l7 6 6-6 8 5"/></svg>
      <svg class="vi" viewBox="0 0 24 24"><path class="b" d="M2 2h21v8l-6 3-5-3-5 5-5-3z"/><path class="ax" d="M1.500 1v21.500h22M2 12l5 5 5-5 5 4 6-4"/><path class="ax" d="M1.500 1h22"/></svg>
      <svg class="vi" viewBox="0 0 24 24"><path class="b" d="M5 3h6v15H5z"/><path class="g" d="M15 3h6v7h-6z"/><path class="ax" d="M1.500 1v21.500h22M2 20l6-8 5 6 7-8 3 3"/></svg>
      <svg class="vi" viewBox="0 0 24 24"><path class="b" d="M5 11h6v11H5z"/><path class="w" d="M11 3h5v19h-5z"/><path class="g" d="M17 6h5v16h-5z"/><path class="ax" d="M1.500 1v21.500h22M2 19l7-7 5 4 8-8"/></svg>

      <svg class="vi" viewBox="0 0 24 24"><path fill="#ee9a3c" d="M2 14l7 4h7l7-4v4l-5 3H6l-4-3z"/><path fill="#8c8c8c" d="M2 4c4 1 5 3 10 3s6-3 11-3v6c-5 0-7 3-11 3S6 10 2 9z"/><path fill="none" stroke="#2a7fc4" stroke-width="2.500" d="M2 10c5 1 5 6 10 6s5-5 11-5"/><path class="ax" d="M1.500 1v21.500h22"/></svg>
      <svg class="vi" viewBox="0 0 24 24"><path class="ax" d="M1.500 22V4M6 22V7h4v15M15 22V4M15 4h4v18M23 4v18M1.500 22.500h22"/><path fill="#2f7fc4" d="M10 8h5v6h-5z"/><path fill="#666" d="M15 3h4v10h-4z"/></svg>
      <svg class="vi" viewBox="0 0 24 24"><path class="b" d="M1 2h22v6H1z"/><path fill="#1f6fb5" d="M1 2h22v2H1z"/><path class="g" d="M4 9h16v6H4z"/><path class="b" d="M8 16h8v6H8z"/></svg>
      <svg class="vi" viewBox="0 0 24 24"><path class="ax" d="M1.500 1v21.500h22"/><path fill="#333" d="M18 3h5v4h-5zM6 17h5v5H6z"/><path fill="#6db0e8" d="M5 7h3v3H5zM13 10h4v4h-4zM18 15h5v5h-5z"/><path fill="#aaa" d="M5 11h4v3H5z"/></svg>
      <svg class="vi" viewBox="0 0 24 24"><circle cx="12" cy="12" r="11" fill="#fff" stroke="#444" stroke-width="1.500"/><path fill="#79b7ea" stroke="#1f6fb5" stroke-width="1.500" d="M12 1a11 11 0 0 1 9 17l-9-6z"/></svg>
      <svg class="vi" viewBox="0 0 24 24"><circle cx="12" cy="12" r="8.500" fill="none" stroke="#79b7ea" stroke-width="6"/><path fill="none" stroke="#1f6fb5" stroke-width="1.500" d="M2 9a10.500 10.500 0 1 0 8-7M7 12a5 5 0 1 0 5-5"/><path fill="none" stroke="#888" stroke-width="5" d="M4 8a9 9 0 0 1 6-5"/></svg>

      <svg class="vi" viewBox="0 0 24 24"><path fill="#6db0e8" stroke="#1f6fb5" d="M1 1h22v22H1z"/><path class="w" d="M11 1h12v6H11zM11 9h5v14h-5zM17 9h6v6h-6zM17 15h6v8h-6z"/><path fill="none" stroke="#1f6fb5" d="M1 11h10"/></svg>
      <svg class="vi" viewBox="0 0 24 24"><circle cx="12" cy="10" r="8" fill="#dff0d8" stroke="#333" stroke-width="1.200"/><path fill="#2f9a4f" d="M8 5l5-1 2 4-4 2-1 4-3-3zM15 11l3-1 0 3-3 2z"/><path class="ax" d="M5 3a10 10 0 0 0 13 16M12 19v3M6 23h13"/></svg>
      <svg class="vi" viewBox="0 0 24 24"><path fill="#8c8c8c" stroke="#555" d="M1 4l4 3 3-4 6 3 6-3 3 5-3 5-2 6-6 3-3-3-4-1-2-5z"/><path fill="#5ea8e6" stroke="#1f6fb5" d="M5 1l7 2-1 6 3 1 7-3 2 5-6 8-5-2-2-3 4-3-5-2-5-4z"/></svg>
      <svg class="vi" viewBox="0 0 24 24"><path fill="#55b4e4" d="M13 0L0 22l11-4z"/><path fill="#1570b8" d="M13 0v18l10 6z"/></svg>
      <svg class="vi" viewBox="0 0 24 24"><path fill="#444" d="M1 19c0-6 5-11 11-11s11 5 11 11h-5c0-3-3-6-6-6s-6 3-6 6z"/><path fill="#6db0e8" stroke="#1f6fb5" d="M5 18c0-5 3-10 7-10 5 0 10 4 11 10h-6c0-3-2-5-5-5s-4 2-4 5z"/><path fill="#444" d="M11 19l6-7 2 1-5 8z"/></svg>
      <svg class="vi" viewBox="0 0 24 24"><path fill="#fff" stroke="#666" stroke-width="1.500" d="M1 2h22v20H1z"/><text class="v123" x="12" y="15.500">123</text><path stroke="#666" d="M3 18.500h18"/></svg>

      <svg class="vi" viewBox="0 0 24 24"><path fill="#fff" stroke="#555" stroke-width="1.500" d="M1 2h22v20H1z"/><path stroke="#1f6fb5" stroke-width="2" d="M8 6h13M8 12h13"/><path stroke="#999" stroke-width="1.500" d="M6 9h8M6 16h8M6 19h6M6 4v16"/></svg>
      <svg class="vi" viewBox="0 0 24 24"><path fill="#fff" stroke="#666" stroke-width="1.500" d="M1 2h22v20H1z"/><path fill="#4aa860" d="M4 14l4-7 4 7z"/><path fill="#e0484a" d="M13 7h8l-4 7z"/><path stroke="#888" stroke-width="1.500" d="M3 17h18"/></svg>
      <svg class="vi" viewBox="0 0 24 24"><path fill="#fff" stroke="#555" stroke-width="1.500" d="M1 2h22v20H1z"/><path fill="#888" d="M1 2h22v4H1z"/><path fill="#fff" stroke="#666" d="M4 9h4v4H4zM4 15h4v4H4z"/><path fill="#f3f2f1" stroke="#333" stroke-width="1.500" d="M12 14h12l-4 5v5h-4v-5z"/></svg>
      <svg class="vi" viewBox="0 0 24 24"><path fill="#fff" stroke="#666" stroke-width="1.500" d="M1 2h22v20H1z"/><path fill="#888" d="M1 2h22v4H1z"/><path stroke="#999" d="M8.500 6v16M15.500 6v16M1 11.500h22M1 16.500h22"/></svg>
      <svg class="vi" viewBox="0 0 24 24"><path fill="#fff" stroke="#666" stroke-width="1.500" d="M1 2h22v20H1z"/><path fill="#888" d="M1 2h22v4H1z"/><path fill="#5aa5e0" d="M2 11h6v5H2zM9 7h6v4H9zM9 16h6v5H9zM16 7h6v4h-6zM16 12h6v4h-6zM16 17h6v4h-6z"/></svg>
      <svg class="vi" viewBox="0 0 24 24"><text class="vR" x="12" y="20">R</text></svg>

      <svg class="vi" viewBox="0 0 24 24"><text class="vPy" x="12" y="19">Py</text></svg>
      <svg class="vi" viewBox="0 0 24 24"><path class="ax" d="M1.500 1v21.500h22"/><path stroke="#777" d="M2 5h16M2 11h12M2 17h8"/><circle cx="20" cy="5" r="3" fill="#6db0e8" stroke="#1f6fb5"/><circle cx="15" cy="11" r="2" fill="#aaa" stroke="#666"/><circle cx="11" cy="17" r="2" fill="#aaa" stroke="#666"/></svg>
      <svg class="vi" viewBox="0 0 24 24"><path fill="none" stroke="#555" stroke-width="1.500" d="M8 12h6M14 4v16M14 4h2M14 12h2M14 20h2"/><path class="b" d="M1 9h8v6H1zM16 1h7v6h-7zM16 9h7v6h-7zM16 17h7v6h-7z"/></svg>
      <svg class="vi" viewBox="0 0 24 24"><path fill="#fff" stroke="#2a6fa8" stroke-width="1.800" d="M1 3h22v15H10l-4 5v-5H1z"/></svg>
      <svg class="vi" viewBox="0 0 24 24"><path fill="#fff" stroke="#666" stroke-width="1.300" d="M4 1h12l5 5v17H4zM16 1v5h5"/><path stroke="#5aa5e0" stroke-width="1.500" d="M11 11h7M8 15h10"/><circle cx="6" cy="10" r="2" fill="#2f85c8"/></svg>
      <svg class="vi" viewBox="0 0 24 24"><path fill="none" stroke="#444" stroke-width="1.800" d="M6 3H1c0 6 2 9 6 10M18 3h5c0 6-2 9-6 10M6 2h12c1 6 0 12-6 14C6 14 5 8 6 2z"/><path fill="#5aa5e0" d="M6 1h12v4H6zM8 20h8v3H8z"/><path stroke="#1f6fb5" stroke-width="2" d="M12 16v4"/></svg>

      <svg class="vi" viewBox="0 0 24 24"><path fill="#fff" stroke="#444" stroke-width="1.500" d="M2 1h13l7 7v15H2zM15 1v7h7"/><path fill="#444" d="M5 15h3v6H5zM10 12h3v9h-3zM15 16h3v5h-3z"/></svg>
      <svg class="vi" viewBox="0 0 24 24"><path fill="#fff" stroke="#666" stroke-width="1.300" d="M2 6h21v17H2z"/><text class="v123" x="13.500" y="18">123</text><path fill="#f7a823" stroke="#c8661a" d="M4 0h7L8 5h4L3 15l2-7H1z"/></svg>
      <svg class="vi" viewBox="0 0 24 24"><path fill="#eee" stroke="#999" stroke-width="1.300" d="M3 4h8v8H3zM3 14h9v9H3zM12 4h9v8h-9z"/><path fill="#f3f2f1" stroke="#333" stroke-width="1.500" d="M11 13h13l-4 5v6h-5v-6z"/><path fill="#f7a823" stroke="#c8661a" d="M4 0h7L8 5h4L3 15l2-7H1z"/></svg>
      <svg class="vi" viewBox="0 0 24 24"><path fill="#fff" stroke="#666" stroke-width="1.300" d="M2 3h21v20H2z"/><text class="vA" x="11" y="18">A</text><path fill="#f3f2f1" stroke="#333" stroke-width="1.500" d="M13 13h11l-3 5v6h-5v-6z"/><path fill="#f7a823" stroke="#c8661a" d="M4 0h7L8 5h4L3 15l2-7H1z"/></svg>
      <svg class="vi" viewBox="0 0 24 24"><path fill="#fff" stroke="#666" stroke-width="1.300" d="M2 3h21v20H2z"/><path stroke="#888" d="M11 8h9M5 14h7"/><path fill="#f3f2f1" stroke="#333" stroke-width="1.500" d="M12 13h12l-4 5v6h-4v-6z"/><path fill="#f7a823" stroke="#c8661a" d="M4 0h7L8 5h4L3 15l2-7H1z"/></svg>
      <svg class="vi" viewBox="0 0 24 24"><path fill="#6db0e8" stroke="#1f6fb5" stroke-width="1.500" d="M2 4h21v18H2z"/><path fill="#fff" d="M5 7h6l8-1v6l-6 4-2 4H5z"/><path fill="#d96f0a" d="M1 1h7v7l-3.500 5L1 8z"/><circle cx="21" cy="14" r="2.500" fill="#d96f0a"/><circle cx="20" cy="21" r="3" fill="#d96f0a"/></svg>

      <svg class="vi" viewBox="0 0 24 24"><path fill="none" stroke="#9a3ba8" stroke-width="1.800" d="M12 1l11 11-11 11L1 12z"/><path fill="none" stroke="#9a3ba8" stroke-width="1.800" d="M7 7l10 10M17 7L7 17"/></svg>
      <svg class="vi" viewBox="0 0 24 24"><path fill="#fff" stroke="#1f86d8" stroke-width="1.500" d="M1 3h15l8 9-8 9H1l8-9z"/><path stroke="#1f86d8" stroke-width="1.500" d="M17 6L6 18"/></svg>
      <div class="v-more">···</div>
    </div>
    <div class="v-dash"></div>
    <div class="v-custom"><svg width="24" height="24" viewBox="0 0 24 24"><path class="vs" d="M21 3H5v8h15v9H3"/></svg></div>
    <div class="v-rule2"></div>
    <div class="v-lab">Values</div>
    <div class="v-drop v-drop1">Add data fields here</div>
    <div class="v-bold">Drill through</div>
    <div class="v-row"><span>Cross-report</span><span class="tg tg-off"><i></i>Off</span></div>
    <div class="v-row"><span>Keep all filters</span><span class="tg tg-on">On<i></i></span></div>
    <div class="v-drop v-drop2">Add drill-through fields here</div>
  </aside>

  <aside class="data">
    <div class="p-head"><span class="p-title">Data</span><svg width="16" height="15" viewBox="0 0 16 15"><path class="f" d="M2 1l6 6.500L2 14M8 1l6 6.500L8 14"/></svg></div>
    <div class="d-search"><svg width="18" height="18" viewBox="0 0 18 18"><circle class="f" cx="7" cy="7" r="6"/><path class="f" d="M11.500 11.500L17 17"/></svg><span>Search</span></div>
    <div class="tree">
      <div class="tree-r"><svg width="10" height="16" viewBox="0 0 10 16"><path class="f" d="M1 1l7 7-7 7"/></svg><svg width="15" height="15" viewBox="0 0 15 15"><path class="f" d="M3 1h9c1 0 2 1 2 2v9c0 1-1 2-2 2H3c-1 0-2-1-2-2V3c0-1 1-2 2-2zM5.500 1v13M9.500 1v13M1 5.500h13M1 9.500h13"/></svg><span>Student Survey</span></div>
      <div class="tree-r"><svg width="10" height="16" viewBox="0 0 10 16"><path class="f" d="M1 1l7 7-7 7"/></svg><svg width="15" height="15" viewBox="0 0 15 15"><path class="f" d="M3 1h9c1 0 2 1 2 2v9c0 1-1 2-2 2H3c-1 0-2-1-2-2V3c0-1 1-2 2-2zM5.500 1v13M9.500 1v13M1 5.500h13M1 9.500h13"/></svg><span>User Mappings</span></div>
    </div>
  </aside>
</main>

<footer class="status">
  <span class="st-page">Page 2 of 2</span>
  <div class="zoom">
    <span class="z-btn">-</span>
    <div class="z-track"><i class="z-tick"></i><i class="z-thumb"></i></div>
    <span class="z-btn z-plus">+</span>
    <span class="z-pct">73%</span>
    <svg width="20" height="15" viewBox="0 0 20 15"><path class="st-i" d="M.5.500h19v14H.500z"/><path class="st-j" d="M3 6V3h3M14 3h3v3M17 9v3h-3M6 12H3V9"/></svg>
  </div>
</footer>
<div class="wall"></div>
</body>
</html>
```

FILE: styles.css
```css
* { box-sizing: border-box; }
html, body { margin: 0; height: 980px; overflow: hidden; }
body {
  display: flex; flex-direction: column; width: 1917px;
  font-family: "Open Sans", "Noto Sans", sans-serif; color: #252423; background: #f3f2f1;
}
svg { display: block; flex: none; }

/* menu */
.menubar { height: 41px; flex: none; display: flex; background: #fafafa; }
.tabs { display: flex; padding-left: 30px; gap: 41px; }
.tab { font-size: 17px; line-height: 32px; height: 34px; color: #333; }
.tab-file { margin-right: 7px; }
.tab-on { font-weight: 600; color: #1f1f1f; border-bottom: 3px solid #117865; }
.share {
  margin: 1px 4px 0 auto; width: 104px; height: 30px; border: 0; border-radius: 4px;
  background: #117865; color: #fff; font: 14px "Open Sans", sans-serif;
  display: flex; align-items: center; justify-content: center; gap: 7px; padding: 0;
}
.wl { fill: none; stroke: #fff; stroke-width: 1.400; }

/* ribbon */
.ribbon {
  height: 113px; flex: none; display: flex; background: #fafafa; padding-bottom: 2px;
  box-shadow: 0 1px 4px rgba(0,0,0,.18); position: relative; z-index: 2;
}
.group { display: flex; flex-direction: column; border-right: 1px solid #d6d6d6; flex: none; }
.g-clip { width: 201px; } .g-data { width: 450px; padding-left: 2px; } .g-query { width: 145px; }
.g-insert { width: 184px; } .g-calc { width: 233px; } .g-sens { width: 91px; }
.g-share { width: 72px; } .g-copilot { width: 167px; }
.gbody { flex: 1; display: flex; }
.glabel { height: 17px; line-height: 19px; text-align: center; font-size: 12.5px; color: #3b3a39; }
.btn { display: flex; flex-direction: column; align-items: center; padding-top: 5px; flex: none; }
.b31 { width: 31px; } .b34 { width: 34px; } .b37 { width: 37px; } .b46 { width: 46px; } .b52 { width: 52px; }
.b56 { width: 56px; } .b64 { width: 64px; } .b67 { width: 67px; } .b70 { width: 70px; } .b76 { width: 76px; }
.b84 { width: 84px; } .b88 { width: 88px; } .b90 { width: 90px; } .b108 { width: 108px; } .b110 { width: 110px; }
.g-clip .b46 { margin-left: 12px; }
.ico { width: 40px; height: 40px; overflow: visible; }
.lbl { margin-top: 4px; font-size: 13.5px; line-height: 20px; text-align: center; white-space: nowrap; color: #333; }
.off .lbl, .small { color: #b9b9b9; }
.chev { display: inline-block; width: 8px; height: 6px; margin-left: 3px; vertical-align: 1px; }
.chev path { fill: none; stroke: #444; stroke-width: 1.400; }
.off .chev path { stroke: #bbb; }
.smallcol { margin-left: 8px; }
.small { height: 30px; display: flex; align-items: center; gap: 8px; font-size: 14px; white-space: nowrap; }
.fa { fill: none; stroke: #c4c4c4; stroke-width: 1.200; }
.fb { fill: none; stroke: #a9c9e3; stroke-width: 1.200; }
.s { fill: none; stroke: #555; stroke-width: 1.500; }
.s2 { fill: #fff; stroke: #777; stroke-width: 1.500; }
.t { fill: none; stroke: #777; stroke-width: 1; }
.xl { font: 700 13px "Open Sans", sans-serif; fill: #fff; text-anchor: middle; }
.atxt { font: 24px "Open Sans", sans-serif; fill: #2f8fd8; text-anchor: middle; }
.fx { font: italic 18px "Liberation Serif", serif; fill: #bcbcbc; }
.collapse { align-self: flex-end; margin: 0 0 5px 360px; }
.collapse path { fill: none; stroke: #333; stroke-width: 1.600; }

/* workspace */
.workspace { flex: 1; min-height: 0; display: flex; }
.leftnav { width: 51px; flex: none; border-right: 1px solid #e1dfdd; background: #f3f2f1; }
.nav { height: 50px; display: flex; align-items: center; justify-content: center; }
.nav-active { box-shadow: inset 3px 0 #117865; }
.nav-sel { background: #ebebeb; }
.n { fill: none; stroke: #333; stroke-width: 1.300; }
.n2 { fill: none; stroke: #777; stroke-width: 1.300; }
.navt { font: 700 9px "Open Sans", sans-serif; fill: #777; text-anchor: middle; }
.center { width: 1417px; flex: none; display: flex; flex-direction: column; }
.upper { flex: 1; min-height: 0; display: flex; }

/* canvas */
.canvas { width: 1167px; flex: none; background: #fff; position: relative; overflow: hidden; }
.undo { position: absolute; left: 773px; top: 12px; display: flex; align-items: center; height: 16px; }
.tb-i path { fill: none; stroke: #c8c6c4; stroke-width: 1.100; }
.tb-t { font-size: 12.5px; color: #555; margin-left: 5px; }
.ml16 { margin-left: 16px; }
.tb-dots { margin-left: 18px; font-size: 14px; color: #555; letter-spacing: 1.500px; }
.tb-doc { margin-left: 105px; }
.tb-doc path { fill: none; stroke: #0f78d4; stroke-width: 1.300; }
.scatter { position: absolute; left: 19px; top: 31px; }
.scatter text { font-family: "Roboto", sans-serif; }
.sc-title { font-size: 13.500px; fill: #252423; letter-spacing: .63px; }
.sc-age { font-size: 12px; font-weight: 700; fill: #555; letter-spacing: .6px; }
.sc-leg text { font-size: 12px; fill: #666; letter-spacing: .4px; }
.sc-grid { fill: none; stroke: #d9d9d9; stroke-dasharray: 1 3; stroke-width: 1; }
.sc-tick text { font-size: 11.500px; fill: #777; }
.sc-ax { font-size: 12px; fill: #333; letter-spacing: .7px; }
.sc-dots { opacity: .9; }

/* sanddance panel */
.sanddance {
  position: absolute; left: 492px; top: 35px; width: 273px; height: 413px; overflow: hidden;
  display: flex; flex-direction: column; background: #f8f8f8; z-index: 1;
}
.stats { height: 61px; flex: none; background: #e8e8e8; padding: 14px 11px 15px; display: flex; gap: 1px; box-shadow: 0 1px 2px rgba(0,0,0,.08); }
.stat { flex: 1; background: #fff; border: 1px solid #d8d8d8; display: flex; flex-direction: column; align-items: center; }
.stat-k { font-size: 8.500px; line-height: 13px; margin-top: 1px; color: #333; }
.stat-v { font-size: 12px; line-height: 16px; color: #333; }
.sd-body { flex: 1; min-height: 0; display: flex; }
.sd-tabs { width: 46px; flex: none; background: #dedede; }
.sd-tab { height: 54.500px; display: flex; align-items: center; justify-content: center; }
.sd-tab-on { background: #f8f8f8; }
.k { fill: none; stroke: #333; stroke-width: 1.100; }
.sd-content { flex: 1; padding: 13px 10px 0 11px; overflow: hidden; min-width: 0; }
.sd-h { font-size: 9px; letter-spacing: 3.100px; color: #555; line-height: 12px; }
.sd-h2 { margin-top: 14px; border-top: 0; }
.radios {
  display: grid; grid-template-columns: 95px 95px; grid-auto-rows: 31px; margin-top: 17px; padding-bottom: 12px;
  border-bottom: 1px solid #e4e4e4;
}
.radio { display: flex; align-items: center; gap: 5px; font-size: 12.5px; color: #333; }
.dot { width: 19px; height: 19px; border-radius: 50%; border: 1px solid #555; background: #fff; flex: none; }
.dot-on { border-color: #0f78d4; background: radial-gradient(circle, #0f78d4 0 5.500px, #fff 6px); }
.sd-f { font-size: 12.5px; color: #333; line-height: 18px; margin-top: 19px; }
.sd-sel {
  margin-top: 4px; height: 29px; border: 1px solid #888; background: #fff; display: flex; align-items: center;
  justify-content: space-between; padding: 0 7px; font-size: 12.5px; color: #333;
}
.sd-f2 { margin-top: 12px; }
.slider { display: flex; align-items: center; margin: 2px 0 0 7px; height: 20px; font-size: 11.500px; color: #333; gap: 15px; }
.track { position: relative; width: 126px; height: 3px; background: #444; border-radius: 2px; }
.knob { position: absolute; left: 4px; top: -6px; width: 14px; height: 14px; border-radius: 50%; background: #fff; border: 1.500px solid #444; }
.sd-scroll { width: 15px; flex: none; background: #fbfbfb; position: relative; }
.thumb { position: absolute; left: 5px; top: 17px; width: 8px; height: 131px; background: #9a9a9a; border-radius: 4px; }
.up, .down { position: absolute; left: 3px; border-left: 5px solid transparent; border-right: 5px solid transparent; }
.up { top: 5px; border-bottom: 6px solid #aaa; }
.down { bottom: 6px; border-top: 6px solid #aaa; }

/* 3D */
.cube3d { position: absolute; left: 765px; top: 36px; border-top: 1px solid #e6e6e6; }
.g3 { fill: none; stroke: #ececec; stroke-width: 2; }
.t3s text { font: 25px "Open Sans", sans-serif; fill: #777; }
.t3a { font: 27px "Open Sans", sans-serif; fill: #555; }
.t3x text { font: 32px "Open Sans", sans-serif; fill: #555; }
.t3b { font: 48px "Open Sans", sans-serif; fill: #444; }
.i3 path { fill: none; stroke: #0f78d4; stroke-width: 3; }
.legend3d {
  position: absolute; left: 1052px; top: 96px; width: 98px; height: 192px; background: #fff;
  border: 1px solid #e3e3e3; box-shadow: 3px 3px 8px rgba(0,0,0,.12); padding: 30px 0 0 13px;
}
.pin { position: absolute; right: 8px; top: 7px; }
.pin path { fill: #fff; stroke: #0f78d4; stroke-width: 1.300; }
.lg-h { font-weight: 700; font-size: 12px; color: #11508a; text-align: center; margin: 0 0 1px -12px; line-height: 16px; }
.lg-r { display: flex; align-items: center; height: 19px; font-size: 12px; gap: 4px; color: #333; white-space: nowrap; letter-spacing: -.2px; }
.sw { width: 11px; height: 11px; flex: none; border-bottom: 1px solid rgba(0,0,0,.22); }
.c1 { background: #d93f2e; } .c2 { background: #f58a4c; } .c3 { background: #fccf7e; } .c4 { background: #f5f2a8; }
.c5 { background: #c7e681; } .c6 { background: #7fc860; } .c7 { background: #2f9e55; }
.pagebreak { position: absolute; left: 1px; right: 0; top: 655px; border-top: 2px dotted #333; }

/* filters */
.filters { width: 250px; flex: none; background: #fff; border-left: 1px solid #b3b0ad; padding: 0 0 0 9px; }
.f-head { height: 57px; display: flex; align-items: center; padding: 0 12px 7px 6px; }
.f-title { font-size: 18px; font-weight: 600; margin-left: 10px; color: #252423; }
.f-eye { margin-left: auto; }
.f-dbl { margin-left: 24px; }
.f { fill: none; stroke: #333; stroke-width: 1.200; }
.f-search {
  width: 225px; height: 43px; border: 1px solid #bdbbb9; border-radius: 2px; display: flex; align-items: center;
  gap: 12px; padding-left: 13px; font-size: 16px; color: #444;
}
.f-sec {
  margin: 5px 0 0 -9px; padding: 21px 16px 8px 9px; border-top: 1px solid #c8c6c4; display: flex; justify-content: space-between;
  font-size: 14.500px; line-height: 20px; color: #333;
}
.f-sec b { font-weight: 400; letter-spacing: 1px; color: #555; line-height: 24px; font-size: 13.500px; }
.f-sec2 { border-top: 0; margin-top: 11px; padding-top: 22px; }
.f-box {
  width: 230px; height: 57px; border: 1px solid #c8c6c4; border-radius: 2px; display: flex; align-items: center; justify-content: center;
  font-size: 14.500px; color: #333;
}

/* page bar */
.pagebar { height: 44px; flex: none; background: #f3f2f1; display: flex; }
.view-i { width: 56px; position: relative; display: flex; align-items: center; justify-content: center; padding: 0 4px 8px 0; }
.view-on::after { content: ""; position: absolute; left: 11px; width: 30px; bottom: 6px; height: 3px; border-radius: 2px; background: #117865; }
.pg { fill: none; stroke: #605e5c; stroke-width: 1.500; }
.arrows { width: 47px; display: flex; align-items: center; justify-content: space-between; padding: 0 5px 9px 9px; }
.al { border-right: 6px solid #c8c6c4; border-top: 6px solid transparent; border-bottom: 6px solid transparent; }
.ar { border-left: 6px solid #c8c6c4; border-top: 6px solid transparent; border-bottom: 6px solid transparent; }
.ptab {
  width: 96px; background: #fff; border-left: 1px solid #b3b0ad; display: flex; align-items: center; justify-content: center;
  font-size: 13.500px; color: #333; position: relative; padding-top: 3px;
}
.ptab-on { font-weight: 600; box-shadow: inset 0 -5px #117865; border-right: 1px solid #b3b0ad; }
.px { position: absolute; right: 5px; top: 2px; font-size: 15px; font-weight: 700; line-height: 16px; color: #333; }
.padd { width: 49px; margin-left: 1px; background: #117865; color: #fff; font-size: 26px; font-weight: 700; display: flex; align-items: center; justify-content: center; line-height: 40px; }

/* panes */
.p-head { height: 57px; display: flex; align-items: center; justify-content: space-between; padding: 0 7px 7px 10px; }
.p-title { font-size: 19px; color: #252423; }
.viz { width: 227px; flex: none; border-left: 1px solid #e1dfdd; background: #f3f2f1; }
.v-sub { margin: -10px 0 0 10px; font-size: 14px; font-weight: 600; line-height: 20px; color: #333; }
.v-modes { display: flex; margin: 5.500px 0 0 10px; align-items: center; }
.v-mode-on { width: 40px; height: 40px; background: #cfcdcb; border-radius: 2px; display: flex; align-items: center; justify-content: center; }
.v-fmt { margin-left: 48px; }
.vk { fill: none; stroke: #333; stroke-width: 1.200; }
.vd { fill: none; stroke: #222; stroke-dasharray: 2 1; }
.v-rule { height: 1px; background: #a19f9d; margin-top: 16px; position: relative; }
.v-rule i { position: absolute; left: 24px; top: -6px; width: 12px; height: 12px; transform: rotate(45deg); background: #f3f2f1; border-left: 1px solid #a19f9d; border-top: 1px solid #a19f9d; }
.v-grid { display: grid; grid-template-columns: repeat(6, 35px); grid-auto-rows: 35px; margin: 5.500px 0 0 7px; align-items: center; justify-items: center; }
.vi { width: 24px; height: 24px; overflow: visible; }
.ax { fill: none; stroke: #555; stroke-width: 1.400; }
.bl { fill: none; stroke: #5aa5e0; stroke-width: 1.400; }
.b { fill: #6db0e8; stroke: #1f6fb5; stroke-width: 1.200; }
.g { fill: #c4c4c4; stroke: #999; stroke-width: 1; }
.w { fill: #fff; stroke: #777; stroke-width: 1; }
.v123 { font: 700 9.500px "Open Sans", sans-serif; fill: #5aa5e0; text-anchor: middle; }
.vR { font: 700 22px "Open Sans", sans-serif; fill: #2a7fb8; text-anchor: middle; }
.vPy { font: 700 20px "Open Sans", sans-serif; fill: #2a7fb8; text-anchor: middle; }
.vA { font: 14px "Open Sans", sans-serif; fill: #5aa5e0; text-anchor: middle; }
.v-more { font-weight: 700; letter-spacing: 2px; font-size: 16px; color: #222; }
.v-dash { border-top: 1px dashed #d4d2d0; margin: 3px 7px 0; }
.v-custom { margin: 8px 0 0 14px; height: 35px; }
.vs { fill: none; stroke: #6ba7dc; stroke-width: 3.500; stroke-dasharray: 1.500 1; }
.v-rule2 { border-top: 1px solid #e1dfdd; margin-top: 1px; }
.v-lab { margin: 8px 0 0 15px; font-size: 13px; line-height: 20px; color: #333; }
.v-drop { margin: 6px 7px 0 5px; background: #fff; border: 1px dashed #c8c6c4; border-radius: 2px; font-size: 14.300px; color: #333; display: flex; align-items: center; white-space: nowrap; }
.v-drop1 { height: 35px; padding-left: 13px; }
.v-drop2 { height: 31px; padding-left: 9px; margin-top: 13px; }
.v-bold { margin: 14px 0 0 15px; font-size: 13.800px; font-weight: 700; line-height: 20px; color: #484644; }
.v-row { margin: 11px 27px 0 15px; height: 23px; display: flex; align-items: center; justify-content: space-between; font-size: 14.200px; color: #333; }
.v-bold + .v-row { margin-top: 9px; }
.tg { width: 40px; height: 20px; border-radius: 10px; font-size: 10.500px; display: flex; align-items: center; justify-content: center; gap: 2px; }
.tg i { width: 10px; height: 10px; border-radius: 50%; }
.tg-off { border: 1px solid #8a8886; background: #fff; color: #555; }
.tg-off i { background: #605e5c; }
.tg-on { background: #117865; color: #fff; }
.tg-on i { background: #fff; }
.data { width: 222px; flex: none; border-left: 1px solid #e1dfdd; background: #f3f2f1; }
.data .p-head { padding-left: 9px; padding-right: 6px; }
.d-search {
  margin-left: 5px; width: 215px; height: 30px; background: #fff; border: 1px solid #e1dfdd; border-bottom: 1px solid #8a8886; border-radius: 5px;
  display: flex; align-items: center; gap: 9px; padding: 1px 0 0 14px; font-size: 15.500px; color: #777;
}
.tree { margin: 12px 0 0 17px; }
.tree-r { height: 30px; display: flex; align-items: center; font-size: 13px; color: #333; }
.tree-r svg + svg { margin-left: 9px; }
.tree-r span { margin-left: 7px; }

/* status */
.status { height: 29px; flex: none; border-top: 1px solid #e1dfdd; background: #f3f2f1; display: flex; align-items: center; justify-content: space-between; padding: 0 19px 0 5px; }
.st-page { font-size: 13px; color: #555; }
.zoom { display: flex; align-items: center; }
.z-btn { font-size: 16px; font-weight: 700; color: #555; width: 10px; text-align: center; }
.z-plus { font-size: 20px; width: 14px; margin-left: 7px; line-height: 20px; }
.z-track { position: relative; width: 125px; height: 1px; margin-left: 4px; background: #666; }
.z-thumb { position: absolute; left: 41px; top: -6px; width: 5px; height: 13px; background: #605e5c; }
.z-tick { position: absolute; left: 62px; top: -3px; width: 1px; height: 7px; background: #666; }
.z-pct { font-size: 13px; color: #666; margin: 0 26px 0 14px; }
.st-i { fill: none; stroke: #605e5c; stroke-width: 1; }
.st-j { fill: none; stroke: #333; stroke-width: 1; }
.wall { height: 8px; flex: none; border-top: 1px solid #000; background: linear-gradient(90deg, #1b2a33, #2a2a1c 20%, #3a2420 30%, #2a2018 55%, #3a2a1c 80%, #2a2018); }
```
